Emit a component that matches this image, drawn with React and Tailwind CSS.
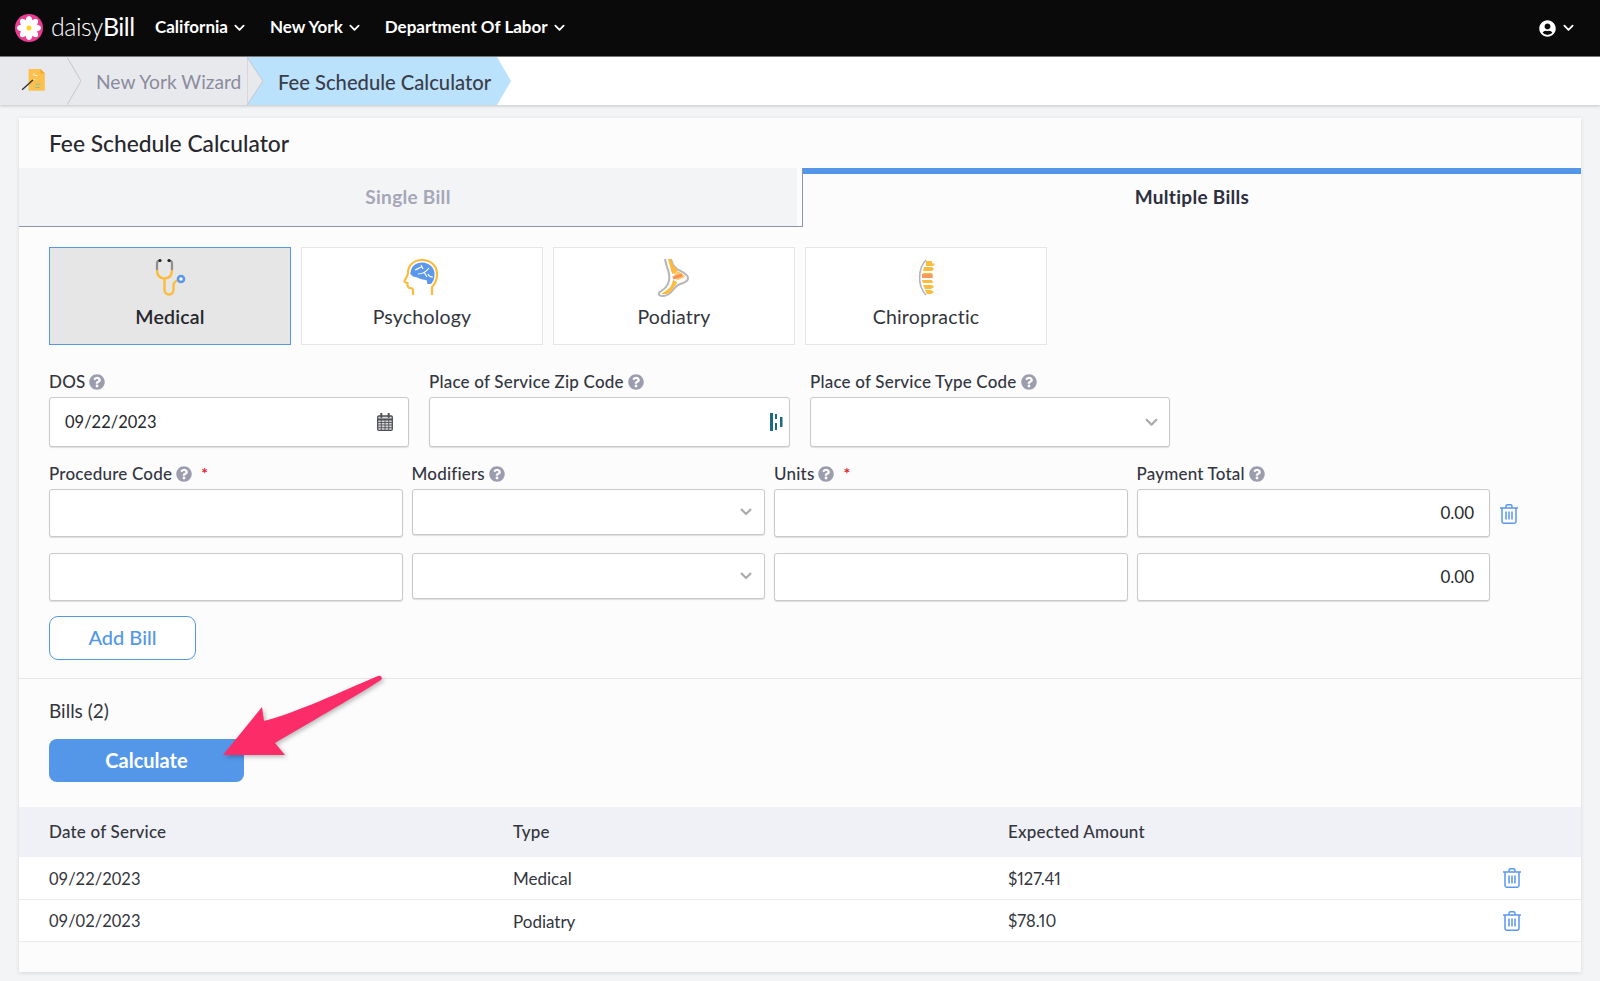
import React from "react";
import { FaQuestionCircle, FaUserCircle } from "react-icons/fa";

const Chevron = ({ className }) => (
  <svg viewBox="0 0 12 8" fill="none" stroke="currentColor" strokeWidth="2" strokeLinecap="round" strokeLinejoin="round" className={className}>
    <path d="M1.5 1.5 6 6l4.5-4.5" />
  </svg>
);

const Trash = () => (
  <svg viewBox="0 0 18 20" width="18" height="20" fill="none" stroke="#5b97eb" strokeWidth="1.5" strokeLinejoin="round">
    <path d="M0 4h18" />
    <path d="M6 4V2.2C6 1.3 6.7.8 7.5.8h3c.8 0 1.5.5 1.5 1.4V4" />
    <path d="M2 4v13.5c0 1 .7 1.7 1.7 1.7h10.6c1 0 1.7-.7 1.7-1.7V4" />
    <path d="M6 7.5v8M9 7.5v8M12 7.5v8" />
  </svg>
);

const Calendar = () => (
  <svg viewBox="0 0 16 18" width="16" height="18" fill="none" stroke="#4f5157">
    <rect x="0.7" y="3" width="14.600" height="14.300" rx="1" fill="#d9d9dc" strokeWidth="1.300" />
    <path d="M.7 6.500h14.600" strokeWidth="2" />
    <path d="M.7 9.500h14.600M.7 12h14.600M.7 14.700h14.600M4.300 6.500v10.800M8 6.500v10.800M11.700 6.500v10.800" strokeWidth="0.900" />
    <path d="M4.300.5v3.500M11.700.5v3.500" strokeWidth="2" strokeLinecap="round" />
  </svg>
);

const Help = () => <FaQuestionCircle className="text-[#9b9dae] text-[16px] shrink-0" />;

const Label = ({ text, required }) => (
  <div className="flex items-center gap-[4px] h-5 text-[17px] tracking-[0.2px] font-medium text-[#33363f] whitespace-nowrap">
    <span>{text}</span>
    <Help />
    {required && <span className="text-[#e0202c] text-[16px] font-bold ml-[5px] -mt-[3px]">*</span>}
  </div>
);

const Box = ({ className = "", children }) => (
  <div className={`flex items-center bg-white border border-[#c9c9cc] rounded-[3px] shadow-[0_1px_1px_rgba(0,0,0,0.12)] ${className}`}>
    {children}
  </div>
);

const Stethoscope = () => (
  <svg viewBox="0 0 40 40" width="42" height="40" fill="none">
    <path d="M7 12V5.5C7 3.5 8.5 2.5 10 2.5M22 12V5.5C22 3.5 20.5 2.5 19 2.5" stroke="#8e8e8e" strokeWidth="2.2" />
    <circle cx="10" cy="2.5" r="1.6" fill="#222" />
    <circle cx="19" cy="2.5" r="1.6" fill="#222" />
    <path d="M7 12c0 6 3 8.500 7.500 8.500S22 18 22 12" stroke="#fcbb3d" strokeWidth="2.4" />
    <path d="M14.500 20.500v11c0 3 2 5 4.500 5s4.500-2 4.500-5v-4c0-2 1.500-4 4-5" stroke="#fcbb3d" strokeWidth="2.4" />
    <circle cx="31" cy="21" r="3" fill="#fff" stroke="#5b97eb" strokeWidth="2.6" />
  </svg>
);

const Brain = () => (
  <svg viewBox="0 0 40 40" width="42" height="40" fill="none">
    <path d="M11 37v-5c0-1-1-2-3-2-3 0-2.500-4-2.500-5 0 0-3.500-.5-3-2 .5-1.500 3.500-5 3.500-8C6 7 12 2 20 2c9 0 15 6 15 14 0 6-2 10-5 13v8" stroke="#fcbb3d" strokeWidth="2.2" />
    <path d="M8.500 15C9 8 14 4.500 20 4.500c7 0 12.500 5 12.500 11.500 0 5-1.500 8-3.500 10h-3.500l-1-4c-3 0-7-1-9-2.500-3-.5-6-1-7.500-4.500Z" fill="#5b97eb" />
    <path d="M13 12c3-1 5-3 7-3M16 16c4 0 8-2 11-6M22 14l3 5M26 16c1 3 3 3 5 3M19 7l2 4" stroke="#fff" strokeWidth="1.2" />
  </svg>
);

const Foot = () => (
  <svg viewBox="0 0 40 40" width="42" height="40" fill="none">
    <path d="M17 1c1 5 3 8 6 10 5 3 11 5 11 9 0 2-2 4-5 5-4 1-7 3-10 7-3 4-6 6-10 6-3 0-5-1-4-3 1-2 5-3 7-6 3-4 4-8 3-13-1-5-3-9-4-15" fill="#fff" stroke="#b5b5b5" strokeWidth="2" strokeLinejoin="round" />
    <path d="M17 1c1 5 4 9 7 11l-3 4c-1-1-2-1-3 0-1-5-3-10-4-15Z" fill="#fcbb3d" />
    <path d="M24 13c3 2 6 3 7 6l-7 3-5-2 2-4c1-1 2-2 3-3Z" fill="#fbc96a" />
    <path d="M19 20l9-3" stroke="#fb8f54" strokeWidth="3" />
    <path d="M19 22c-1 5-3 8-6 10-2 2-5 3-6 4l6 0c3-1 5-4 7-7 2-2 3-4 3-5Z" fill="#fcbb3d" />
  </svg>
);

const Spine = () => (
  <svg viewBox="0 0 40 40" width="42" height="40" fill="none">
    <path d="M20 2C12 10 11 28 20 37" stroke="#b5b5b5" strokeWidth="1.6" />
    <path d="M20 3h6v2l3 1-2 2-7 0ZM18 9h8l2 2-2 2h-9ZM17 15h9l1 3-10 0Z" fill="#fcbb3d" />
    <path d="M16 16h10l1 4H16Z" fill="#fb9a5c" />
    <path d="M16 22h10l1 3H17ZM17 27h9l2 2-3 2h-6ZM19 32h6l3 2-3 2h-4Z" fill="#fcbb3d" />
  </svg>
);

const specialties = [
  { name: "Medical", Icon: Stethoscope, active: true },
  { name: "Psychology", Icon: Brain },
  { name: "Podiatry", Icon: Foot },
  { name: "Chiropractic", Icon: Spine },
];

const bills = [
  { date: "09/22/2023", type: "Medical", amount: "$127.41" },
  { date: "09/02/2023", type: "Podiatry", amount: "$78.10" },
];

export default function App() {
  return (
    <div className="relative w-full min-h-screen bg-[#f3f4f6] text-[#2f3138] font-['Lato','Open_Sans',sans-serif]">
      <header className="flex items-center h-[56px] bg-[#0a0a0a] text-white">
        <svg viewBox="0 0 28 28" width="28" height="28" className="ml-[15px]">
          <circle cx="14" cy="14" r="14" fill="#ec3b92" />
          {[0, 45, 90, 135, 180, 225, 270, 315].map((a) => (
            <ellipse key={a} cx="14" cy="7.500" rx="3.400" ry="5.500" fill="#fff" transform={`rotate(${a} 14 14)`} />
          ))}
          <circle cx="14" cy="14" r="2.500" fill="#f9d423" />
        </svg>
        <div className="ml-[8px] w-[104px] -mt-[3px] text-[25px] leading-none tracking-[-0.5px] whitespace-nowrap">
          <span className="font-light">daisy</span>
          <span className="font-normal">Bill</span>
        </div>
        <nav className="flex items-center gap-[25px] -mt-[2px] text-[17px] font-bold">
          <span className="flex items-center gap-[6px]">California <Chevron className="w-[11px] h-[8px] mt-[2px]" /></span>
          <span className="flex items-center gap-[6px]">New York <Chevron className="w-[11px] h-[8px] mt-[2px]" /></span>
          <span className="flex items-center gap-[6px]">Department Of Labor <Chevron className="w-[11px] h-[8px] mt-[2px]" /></span>
        </nav>
        <div className="ml-auto mr-[26px] flex items-center gap-[7px]">
          <FaUserCircle className="text-[17px]" />
          <Chevron className="w-[11px] h-[8px]" />
        </div>
      </header>

      <div className="flex h-[49px] bg-white shadow-[0_1px_3px_rgba(0,0,0,0.2)] border-t border-[#777]">
        <div className="flex items-center justify-center w-[67px] bg-[#e8e9ed] pl-[1px]">
          <svg viewBox="0 0 24 24" width="26" height="26">
            <path d="M7 1h11l4 4v16H7Z" fill="#fcc04f" />
            <path d="M18 1l4 4h-4Z" fill="#f5a623" />
            <path d="M1 20l10-9" stroke="#333" strokeWidth="1.300" />
            <path d="M12 5v2M15 7h-2M12 10l1 1" stroke="#fff" strokeWidth="0.900" />
            <path d="M13 15h5M13 18h4" stroke="#7cc4a0" strokeWidth="0.800" />
          </svg>
        </div>
        <svg viewBox="0 0 14 48" width="14" height="48" preserveAspectRatio="none" className="bg-[#e8e9ed]">
          <path d="M0 0 14 24 0 48" fill="none" stroke="#c5c6cc" strokeWidth="1" />
        </svg>
        <div className="flex items-center w-[166px] bg-[#e8e9ed] pl-[15px] pt-[2px] text-[19.200px] text-[#8a8c9e] whitespace-nowrap">New York Wizard</div>
        <svg viewBox="0 0 16 48" width="16" height="48" preserveAspectRatio="none" className="bg-[#bbe2fd]">
          <path d="M0 0 16 24 0 48Z" fill="#e8e9ed" stroke="#c5c6cc" strokeWidth="1" />
        </svg>
        <div className="flex items-center w-[234px] bg-[#bbe2fd] pl-[15px] pt-[2px] text-[20.200px] font-medium text-[#3a3d4a] whitespace-nowrap">Fee Schedule Calculator</div>
        <svg viewBox="0 0 14 48" width="14" height="48" preserveAspectRatio="none">
          <path d="M0 0 14 24 0 48Z" fill="#bbe2fd" />
        </svg>
      </div>

      <main className="mt-[13px] ml-[19px] w-[1562px] h-[854px] bg-[#fcfcfc] shadow-[0_1px_4px_rgba(0,0,0,0.12)]">
        <h1 className="flex items-center h-[50px] pl-[30px] pt-[3px] text-[22.750px] font-medium text-[#27282e]">Fee Schedule Calculator</h1>

        <div className="flex h-[59px] text-[19px] tracking-[0.3px] font-bold">
          <div className="flex w-[784px] border-b border-r border-[#8d94b0]">
            <div className="flex items-center justify-center w-[778px] bg-[#f3f4f6] text-[#a5a7b6]">Single Bill</div>
          </div>
          <div className="flex items-center justify-center flex-1 border-t-[6px] border-[#5497e8] pb-[6px] text-[#2c2f3c]">Multiple Bills</div>
        </div>

        <div className="flex gap-[10px] pl-[30px] pt-[20px]">
          {specialties.map(({ name, Icon, active }) => (
            <div
              key={name}
              className={`flex flex-col items-center w-[242px] h-[98px] pt-[10px] border ${active ? "bg-[#e6e6e6] border-[#5497e8]" : "bg-white border-[#e6e6e6]"}`}
            >
              <Icon />
              <span className={`mt-[7px] text-[19.500px] tracking-[0.2px] leading-6 ${active ? "font-semibold text-[#26272c]" : "text-[#33353c]"}`}>{name}</span>
            </div>
          ))}
        </div>

        <div className="flex gap-[20px] pl-[30px] pt-[27px]">
          <div className="w-[360px]">
            <Label text="DOS" />
            <Box className="mt-[5px] h-[50px] px-[15px] justify-between text-[16.500px] text-[#26272c]">
              <span>09/22/2023</span>
              <Calendar />
            </Box>
          </div>
          <div className="w-[361px]">
            <Label text="Place of Service Zip Code" />
            <Box className="mt-[5px] h-[50px] pr-[5px] justify-end">
              <svg viewBox="0 0 14 18" width="14" height="18" fill="#1c6a80">
                <rect x="0" y="0" width="3" height="18" />
                <rect x="5" y="1" width="2" height="5" />
                <rect x="5" y="10" width="2" height="7" />
                <rect x="10" y="4" width="2.500" height="10" />
              </svg>
            </Box>
          </div>
          <div className="w-[360px]">
            <Label text="Place of Service Type Code" />
            <Box className="mt-[5px] h-[50px] pr-[11px] justify-end">
              <Chevron className="w-[13px] h-[9px] text-[#a9a9ad]" />
            </Box>
          </div>
        </div>

        <div className="grid grid-cols-[353.500px_353.500px_353.500px_353.500px] gap-x-[9px] pl-[30px] pt-[17px]">
          <Label text="Procedure Code" required />
          <Label text="Modifiers" />
          <Label text="Units" required />
          <Label text="Payment Total" />
        </div>

        {[0, 1].map((row) => (
          <div key={row} className={`flex pl-[30px] ${row === 0 ? "pt-[5px]" : "pt-[16px]"}`}>
            <div className="grid grid-cols-[353.500px_353.500px_353.500px_353.500px] gap-x-[9px]">
              <Box className="h-[48px]" />
              <Box className="h-[46px] pr-[12px] justify-end">
                <Chevron className="w-[12px] h-[8px] text-[#a9a9ad]" />
              </Box>
              <Box className="h-[48px]" />
              <Box className="h-[48px] px-[15px] justify-end text-[17px] text-[#26272c]">0.00</Box>
            </div>
            {row === 0 && (
              <div className="flex items-center pl-[10px] pt-[2px] h-[48px]">
                <Trash />
              </div>
            )}
          </div>
        ))}

        <div className="pl-[30px] pt-[15px]">
          <button className="w-[147px] h-[44px] pb-[2px] bg-white border border-[#5497e8] rounded-[9px] text-[20px] font-medium text-[#5497e8]">Add Bill</button>
        </div>

        <div className="mt-[18px] border-t border-[#e5e5e5] pl-[30px] pt-[22px]">
          <div className="h-[20px] leading-5 text-[19px] text-[#33353c]">Bills (2)</div>
          <button className="mt-[18px] w-[195px] h-[43px] pb-[2px] bg-[#5497e8] rounded-[8px] text-[20px] font-bold text-white">Calculate</button>
        </div>

        <div className="mt-[25px] flex items-center h-[50px] pl-[30px] bg-[#eff1f6] text-[17px] tracking-[0.2px] font-medium text-[#33353c]">
          <span className="w-[464px]">Date of Service</span>
          <span className="w-[495px]">Type</span>
          <span>Expected Amount</span>
        </div>
        <div>
          {bills.map((b) => (
            <div key={b.date} className="flex items-center h-[42px] first:h-[43px] pl-[30px] pt-[2px] bg-white border-b border-[#ececec] text-[16.500px] text-[#33353c]">
              <span className="w-[464px]">{b.date}</span>
              <span className="w-[495px] text-[17px]">{b.type}</span>
              <span className="w-[495px] proportional-nums">{b.amount}</span>
              <div className="-mt-[2px]">
                <Trash />
              </div>
            </div>
          ))}
        </div>
      </main>

      <svg viewBox="0 0 170 90" width="170" height="90" className="absolute left-[220px] top-[670px] drop-shadow-[2px_2px_2px_rgba(0,0,0,0.25)]">
        <path d="M3 85 42 37 44 51C78 42 120 22 158 6c3-1 5 2 3 4C130 30 85 55 55 73L65 85Z" fill="#fb2c68" />
      </svg>
    </div>
  );
}
